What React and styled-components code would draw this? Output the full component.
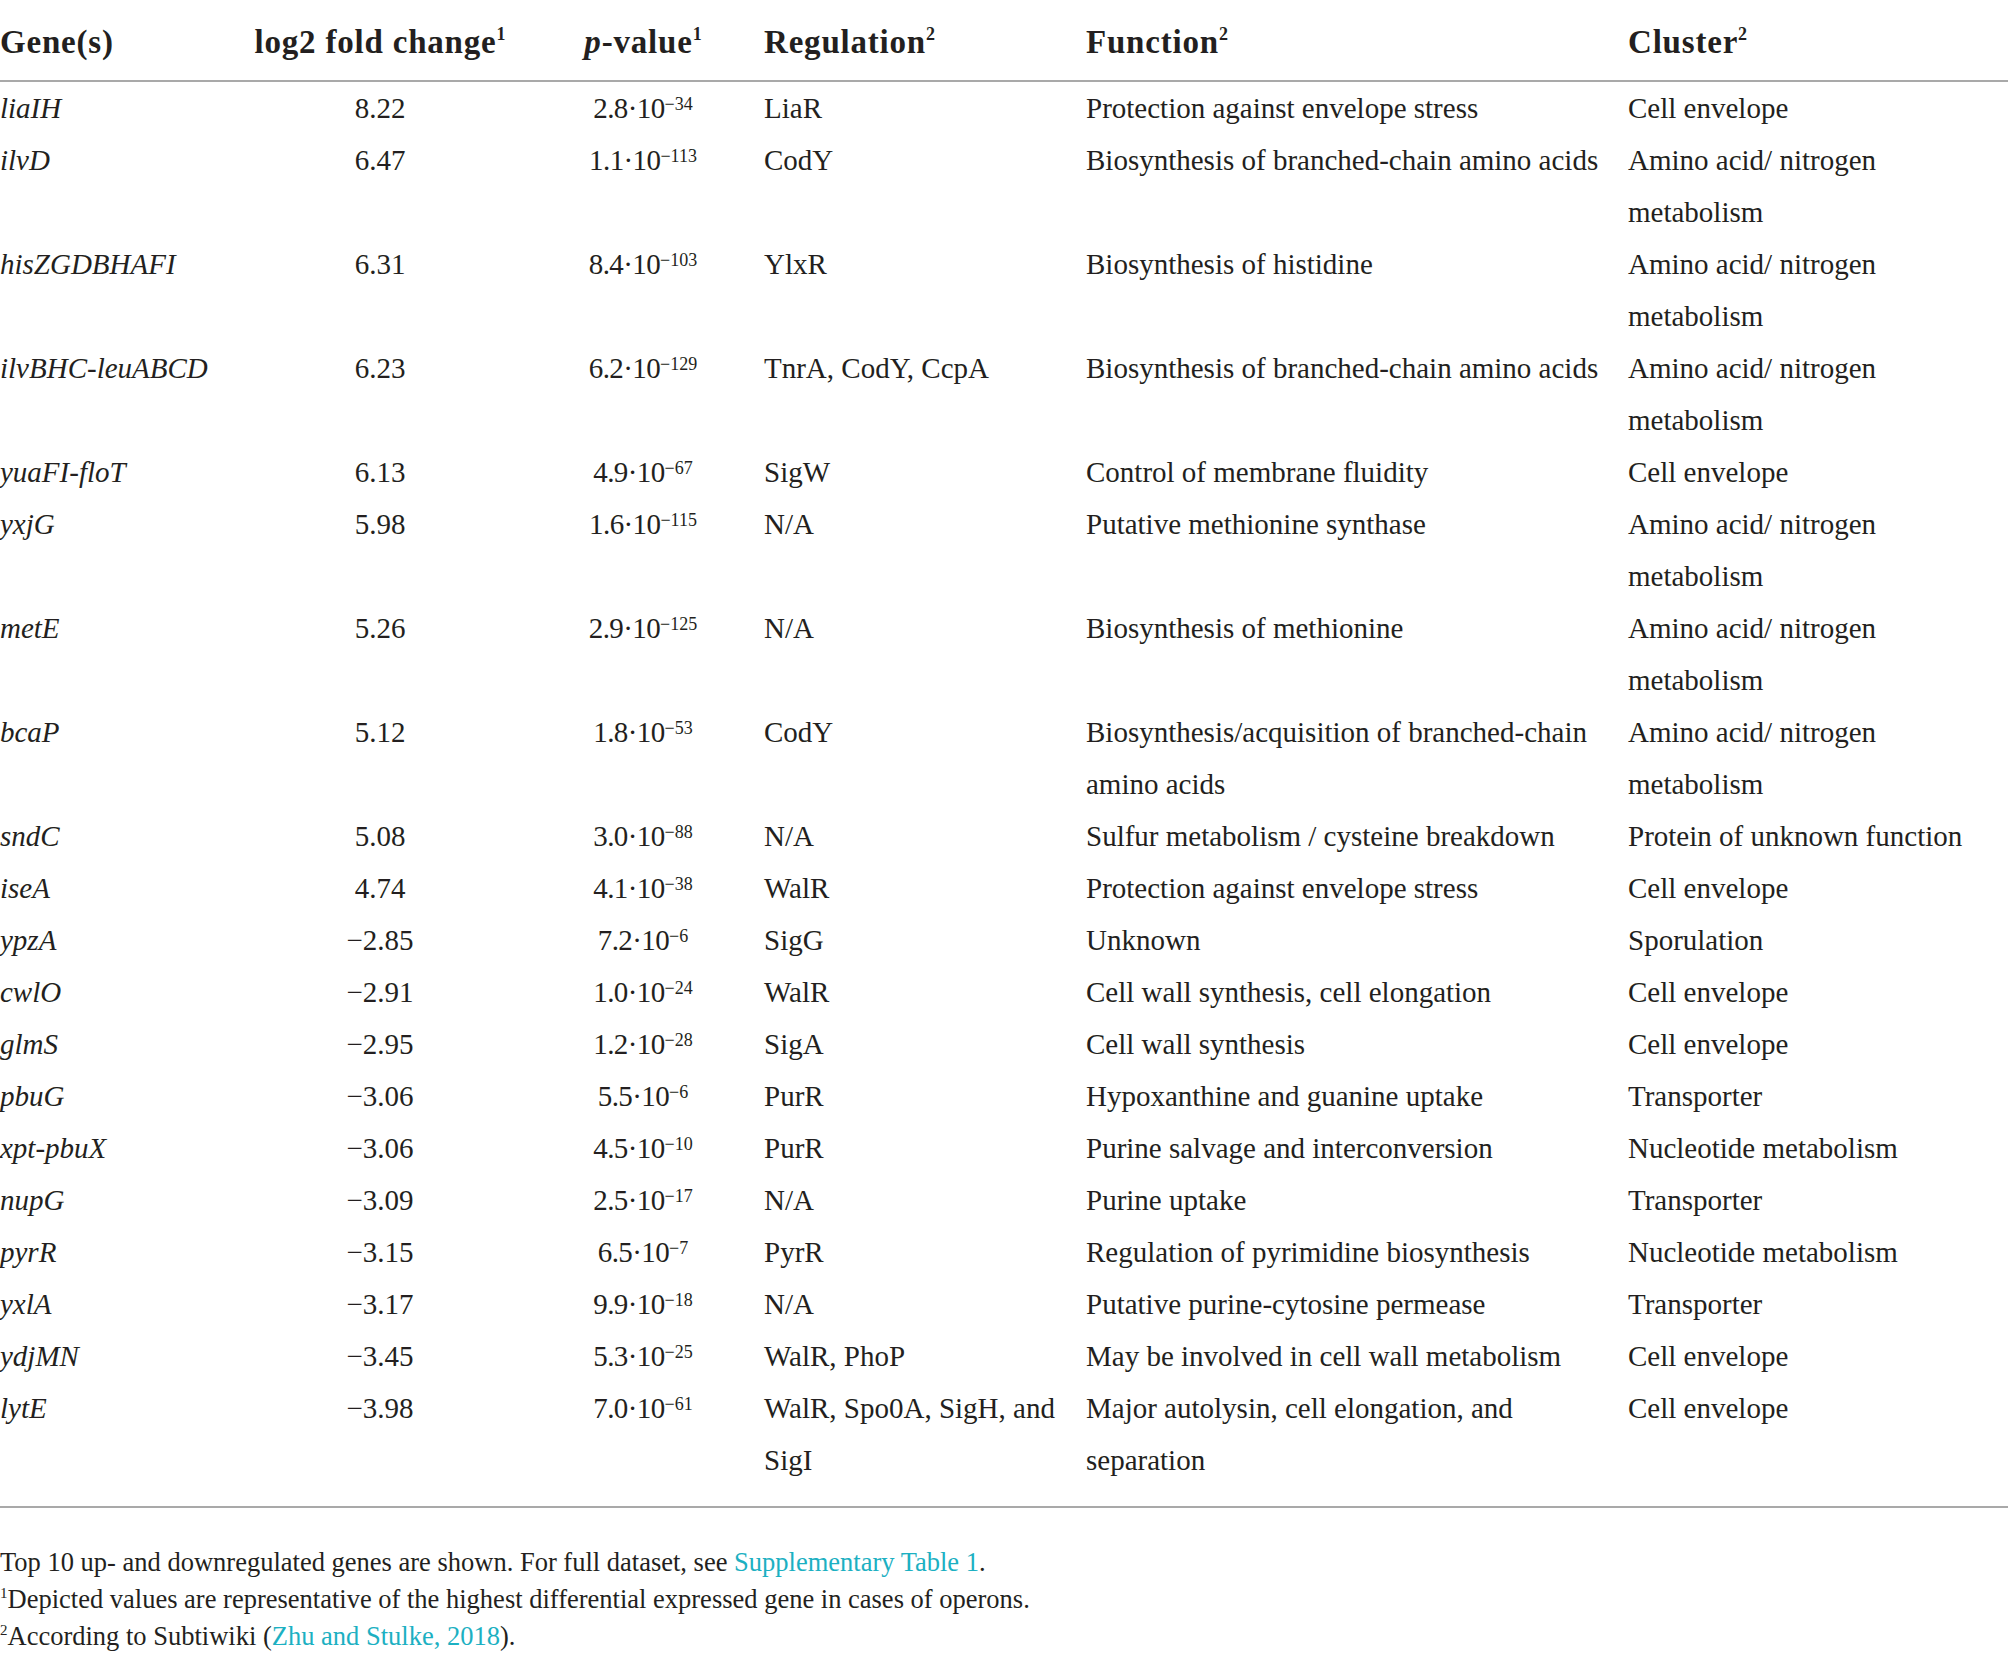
import React from "react";
import styled, { createGlobalStyle } from "styled-components";

const Global = createGlobalStyle`
  html, body { margin: 0; padding: 0; background: #ffffff; overflow: hidden; }
  body { font-family: "Liberation Serif", "Times New Roman", serif; color: #231f20; }
`;

const Page = styled.div`
  width: 2008px;
`;

const Table = styled.table`
  width: 2008px;
  table-layout: fixed;
  border-collapse: separate;
  border-spacing: 0;
  font-family: "Liberation Serif", "Times New Roman", serif;
  color: #231f20;
`;

const Th = styled.th`
  font-size: 33px;
  font-weight: 700;
  letter-spacing: 0.8px;
  line-height: 52px;
  padding: 16px 0 12px 0;
  text-align: ${(p) => (p.$center ? "center" : "left")};
  border-bottom: 2px solid #a9a9a9;
  white-space: nowrap;
`;

const Td = styled.td`
  font-size: 29px;
  line-height: 52px;
  padding: 0 ${(p) => (p.$padRight ? p.$padRight : 0)}px ${(p) => (p.$last ? 20 : 0)}px 0;
  vertical-align: top;
  text-align: ${(p) => (p.$center ? "center" : "left")};
  font-style: ${(p) => (p.$italic ? "italic" : "normal")};
  letter-spacing: ${(p) => (p.$tight ? "-0.6px" : "normal")};
  border-bottom: ${(p) => (p.$last ? "2px solid #a9a9a9" : "none")};
`;

const HeadSup = styled.sup`
  font-size: 18px;
  line-height: 0;
  vertical-align: 13px;
  letter-spacing: 0;
`;

const Exp = styled.sup`
  font-size: 18px;
  line-height: 0;
  vertical-align: 8px;
  letter-spacing: 0;
`;

const Ital = styled.i`
  font-style: italic;
`;

const Notes = styled.div`
  margin-top: 36px;
  font-size: 26.5px;
  line-height: 37px;
  color: #231f20;
`;

const NoteLine = styled.div``;

const NoteSup = styled.sup`
  font-size: 15px;
  line-height: 0;
  vertical-align: 10px;
`;

const Link = styled.span`
  color: #1cb0c2;
`;

const rows = [
  ["liaIH", "8.22", "2.8", "−34", "LiaR", "Protection against envelope stress", "Cell envelope"],
  ["ilvD", "6.47", "1.1", "−113", "CodY", "Biosynthesis of branched-chain amino acids", "Amino acid/ nitrogen metabolism"],
  ["hisZGDBHAFI", "6.31", "8.4", "−103", "YlxR", "Biosynthesis of histidine", "Amino acid/ nitrogen metabolism"],
  ["ilvBHC-leuABCD", "6.23", "6.2", "−129", "TnrA, CodY, CcpA", "Biosynthesis of branched-chain amino acids", "Amino acid/ nitrogen metabolism"],
  ["yuaFI-floT", "6.13", "4.9", "−67", "SigW", "Control of membrane fluidity", "Cell envelope"],
  ["yxjG", "5.98", "1.6", "−115", "N/A", "Putative methionine synthase", "Amino acid/ nitrogen metabolism"],
  ["metE", "5.26", "2.9", "−125", "N/A", "Biosynthesis of methionine", "Amino acid/ nitrogen metabolism"],
  ["bcaP", "5.12", "1.8", "−53", "CodY", "Biosynthesis/acquisition of branched-chain amino acids", "Amino acid/ nitrogen metabolism"],
  ["sndC", "5.08", "3.0", "−88", "N/A", "Sulfur metabolism / cysteine breakdown", "Protein of unknown function"],
  ["iseA", "4.74", "4.1", "−38", "WalR", "Protection against envelope stress", "Cell envelope"],
  ["ypzA", "−2.85", "7.2", "−6", "SigG", "Unknown", "Sporulation"],
  ["cwlO", "−2.91", "1.0", "−24", "WalR", "Cell wall synthesis, cell elongation", "Cell envelope"],
  ["glmS", "−2.95", "1.2", "−28", "SigA", "Cell wall synthesis", "Cell envelope"],
  ["pbuG", "−3.06", "5.5", "−6", "PurR", "Hypoxanthine and guanine uptake", "Transporter"],
  ["xpt-pbuX", "−3.06", "4.5", "−10", "PurR", "Purine salvage and interconversion", "Nucleotide metabolism"],
  ["nupG", "−3.09", "2.5", "−17", "N/A", "Purine uptake", "Transporter"],
  ["pyrR", "−3.15", "6.5", "−7", "PyrR", "Regulation of pyrimidine biosynthesis", "Nucleotide metabolism"],
  ["yxlA", "−3.17", "9.9", "−18", "N/A", "Putative purine-cytosine permease", "Transporter"],
  ["ydjMN", "−3.45", "5.3", "−25", "WalR, PhoP", "May be involved in cell wall metabolism", "Cell envelope"],
  ["lytE", "−3.98", "7.0", "−61", "WalR, Spo0A, SigH, and SigI", "Major autolysin, cell elongation, and separation", "Cell envelope"],
];

export default function App() {
  return (
    <Page>
      <Global />
      <Table>
        <colgroup>
          <col style={{ width: 238 }} />
          <col style={{ width: 284 }} />
          <col style={{ width: 242 }} />
          <col style={{ width: 322 }} />
          <col style={{ width: 542 }} />
          <col style={{ width: 380 }} />
        </colgroup>
        <thead>
          <tr>
            <Th>Gene(s)</Th>
            <Th $center>
              log2 fold change<HeadSup>1</HeadSup>
            </Th>
            <Th $center>
              <Ital>p</Ital>-value<HeadSup>1</HeadSup>
            </Th>
            <Th>
              Regulation<HeadSup>2</HeadSup>
            </Th>
            <Th>
              Function<HeadSup>2</HeadSup>
            </Th>
            <Th>
              Cluster<HeadSup>2</HeadSup>
            </Th>
          </tr>
        </thead>
        <tbody>
          {rows.map((r, i) => {
            const last = i === rows.length - 1;
            return (
              <tr key={r[0]}>
                <Td $italic $last={last}>{r[0]}</Td>
                <Td $center $last={last}>{r[1]}</Td>
                <Td $center $tight $last={last}>
                  {r[2]}·10<Exp>{r[3]}</Exp>
                </Td>
                <Td $last={last} $padRight={14}>{r[4]}</Td>
                <Td $last={last}>{r[5]}</Td>
                <Td $last={last}>{r[6]}</Td>
              </tr>
            );
          })}
        </tbody>
      </Table>
      <Notes>
        <NoteLine>
          Top 10 up- and downregulated genes are shown. For full dataset, see{" "}
          <Link>Supplementary Table 1</Link>.
        </NoteLine>
        <NoteLine>
          <NoteSup>1</NoteSup>Depicted values are representative of the highest differential expressed gene in cases of operons.
        </NoteLine>
        <NoteLine>
          <NoteSup>2</NoteSup>According to Subtiwiki (<Link>Zhu and Stulke, 2018</Link>).
        </NoteLine>
      </Notes>
    </Page>
  );
}
